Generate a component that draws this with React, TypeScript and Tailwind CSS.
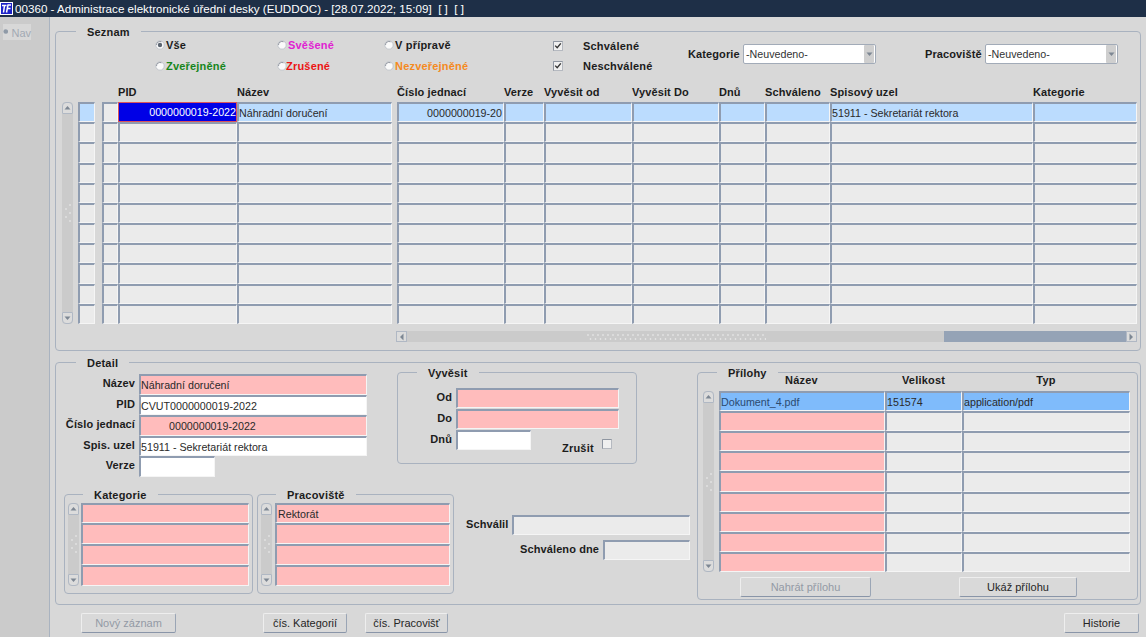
import React from "react";

const cellBase =
  "box-border shrink-0 border-t-2 border-l-2 border-t-[#8f9cb0] border-l-[#8f9cb0] border-r border-b border-r-[#f5f5f5] border-b-[#f5f5f5] overflow-hidden whitespace-nowrap text-[10.7px] leading-[19px] text-[#2a2a2a] pl-0 pr-[1px]";

function Cell({ className = "", children }: { className?: string; children?: React.ReactNode }) {
  return <div className={`${cellBase} ${className}`}>{children}</div>;
}

function Radio({ on = false }: { on?: boolean }) {
  return (
    <svg width="10" height="10" viewBox="0 0 10 10" className="shrink-0">
      <circle cx="5" cy="5" r="4.2" fill="#fafafa" stroke="#c2c6cc" strokeWidth="1" />
      <path d="M1.5 5a3.5 3.5 0 0 1 5-3.2" fill="none" stroke="#8a8f98" strokeWidth="0.9" />
      {on && <circle cx="5" cy="5" r="2.2" fill="#5b6470" />}
    </svg>
  );
}

function Check({ on = true }: { on?: boolean }) {
  return (
    <svg width="10" height="10" viewBox="0 0 10 10" className="shrink-0">
      <rect x="0.5" y="0.5" width="9" height="9" fill="#efefef" stroke="#b5b9c0" />
      <path d="M0.5 9.5V0.5H9.5" fill="none" stroke="#8f96a1" />
      {on && <path d="M2.2 4.6L4.2 6.8L7.8 2.4" fill="none" stroke="#333" strokeWidth="1.4" />}
    </svg>
  );
}

function Arrow({ dir }: { dir: "up" | "down" | "left" | "right" }) {
  const p = {
    up: "M1.5 6.5L4.5 3L7.5 6.5Z",
    down: "M1.5 3.5L4.5 7L7.5 3.5Z",
    left: "M6.5 1.5L3 5L6.5 8.5Z",
    right: "M2.5 1.5L6 5L2.5 8.5Z",
  }[dir];
  return (
    <svg width="9" height="10" viewBox="0 0 9 10">
      <path d={p} fill="#7d8793" />
    </svg>
  );
}

function Dots({ n, v = false }: { n: number; v?: boolean }) {
  return (
    <svg width={v ? 8 : n * 5} height={v ? n * 4 : 8} className="shrink-0">
      {Array.from({ length: n }).map((_, i) => (
        <g key={i}>
          {v ? (
            <circle cx={i % 2 ? 2 : 6} cy={i * 4 + 2} r="0.8" fill="#efefef" />
          ) : (
            <>
              <circle cx={i * 5 + 2} cy="2" r="0.8" fill="#efefef" />
              <circle cx={i * 5 + 4.5} cy="6" r="0.8" fill="#efefef" />
            </>
          )}
        </g>
      ))}
    </svg>
  );
}

function VScroll({ className = "" }: { className?: string }) {
  return (
    <div className={`flex flex-col items-center w-[11px] shrink-0 bg-[#cbcbcb] rounded-[4px] ${className}`}>
      <div className="h-[12px] w-[11px] flex items-center justify-center bg-[#dcdcdc] border border-[#b0b8c4] rounded-t-[4px] rounded-b-[1px]">
        <Arrow dir="up" />
      </div>
      <div className="flex-1 flex items-center justify-center">
        <Dots n={5} v />
      </div>
      <div className="h-[12px] w-[11px] flex items-center justify-center bg-[#dcdcdc] border border-[#b0b8c4] rounded-b-[4px] rounded-t-[1px]">
        <Arrow dir="down" />
      </div>
    </div>
  );
}

function Frame({
  title,
  titleClass,
  className = "",
  children,
}: {
  title: string;
  titleClass: string;
  className?: string;
  children?: React.ReactNode;
}) {
  return (
    <div className={`relative box-border border border-[#a9b2bf] rounded-[4px] ${className}`}>
      <div
        className={`absolute top-[-7px] bg-[#d8d8d8] px-[11px] text-[11px] font-bold leading-[14px] text-[#1c1c1c] tracking-[0.2px] ${titleClass}`}
      >
        {title}
      </div>
      {children}
    </div>
  );
}

function Btn({ children, disabled, className = "" }: { children: string; disabled?: boolean; className?: string }) {
  return (
    <div
      className={`box-border h-[20px] flex items-center justify-center rounded-[2px] border border-t-[#eeeeee] border-l-[#eeeeee] border-r-[#9aa5b5] border-b-[#8995a8] bg-[#d9d9d9] text-[11px] ${disabled ? "text-[#939aa5]" : "text-[#262626]"} ${className}`}
    >
      {children}
    </div>
  );
}

function RadioItem({ label, on, color, labelClass = "" }: { label: string; on?: boolean; color: string; labelClass?: string }) {
  return (
    <div className="flex items-center gap-[1px] h-[14px]">
      <Radio on={on} />
      <span className={`text-[11px] font-bold tracking-[0.2px] ${color} ${labelClass}`}>{label}</span>
    </div>
  );
}

function Select() {
  return (
    <div className="box-border h-[20px] w-[133px] flex items-center justify-between bg-white border border-[#a2abb8] rounded-[2px] shrink-0">
      <span className="pl-[2px] text-[10.7px] text-[#333]">-Neuvedeno-</span>
      <span className="h-[18px] w-[10px] mr-[1px] bg-[#cfcfcf] rounded-[1px] flex items-center justify-center">
        <Arrow dir="down" />
      </span>
    </div>
  );
}

const cols = [
  "w-[17px]",
  "ml-[7px] w-[16px]",
  "w-[119px]",
  "w-[155px]",
  "ml-[5px] w-[107px]",
  "w-[40px]",
  "w-[88px]",
  "w-[87px]",
  "w-[46px]",
  "w-[65px]",
  "w-[203px]",
  "w-[104px]",
];

const headers = ["", "", "PID", "Název", "Číslo jednací", "Verze", "Vyvěsit od", "Vyvěsit Do", "Dnů", "Schváleno", "Spisový uzel", "Kategorie"];

function ListRow({ selected }: { selected?: boolean }) {
  return (
    <div className="flex h-full min-h-0">
      {cols.map((c, i) => {
        const bg = selected && i !== 1 ? "bg-[#bbdcfe]" : "bg-[#ebebeb]";
        if (selected && i === 2)
          return (
            <div key={i} className={`box-border h-full shrink-0 border border-[#d9545c] bg-[#0000e6] text-white text-[10.7px] leading-[18px] text-right overflow-hidden whitespace-nowrap ${c}`}>
              0000000019-2022
            </div>
          );
        let t: React.ReactNode = null;
        if (selected && i === 3) t = "Náhradní doručení";
        if (selected && i === 4) t = <div className="text-right">0000000019-20</div>;
        if (selected && i === 10) t = "51911 - Sekretariát rektora";
        return (
          <Cell key={i} className={`${bg} ${c}`}>
            {t}
          </Cell>
        );
      })}
    </div>
  );
}

function Field({ label, w, bg, h = "h-[20.5px]", children, labelW = "w-[83px]" }: { label: string; w: string; bg: string; h?: string; children?: React.ReactNode; labelW?: string }) {
  return (
    <div className="flex items-start">
      <div className={`${labelW} pr-[4px] pt-[2px] text-right text-[11px] font-bold leading-[15px] tracking-[0.1px] text-[#1c1c1c] shrink-0`}>{label}</div>
      <Cell className={`${w} ${bg} ${h}`}>{children}</Cell>
    </div>
  );
}

function ListBox({ title, titleClass, w, inner, text, gap }: { title: string; titleClass: string; w: string; inner: string; text?: string; gap: string }) {
  return (
    <Frame title={title} titleClass={titleClass} className={`h-[100px] shrink-0 ${w}`}>
      <div className={`flex ${gap} pl-[3px] pt-[8px]`}>
        <VScroll className="h-[83px]" />
        <div className={`grid grid-rows-4 h-[83px] ${inner}`}>
          {[0, 1, 2, 3].map((i) => (
            <Cell key={i} className="w-full bg-[#ffbcbc] pl-[1px] leading-[18px]">
              {i === 0 ? text : null}
            </Cell>
          ))}
        </div>
      </div>
    </Frame>
  );
}

export default function App() {
  return (
    <div
      className="w-[1146px] h-[637px] overflow-hidden flex flex-col bg-[#d8d8d8]"
      style={{ fontFamily: '"Liberation Sans", Arial, sans-serif' }}
    >
      {/* Title bar */}
      <div className="h-[17px] shrink-0 bg-[#1e2f47] flex items-center text-white text-[11.65px]">
        <svg width="13" height="13" viewBox="0 0 13 13" className="mr-[2px] shrink-0">
          <rect width="13" height="13" fill="#fff" />
          <rect x="1" y="1" width="11" height="11" fill="#1c22c8" />
          <path d="M2 3.5H6.5M4.5 3.5L3.5 10.5M7.5 3H11M8 3L6.5 10.5M7.5 6.5H10.5" stroke="#fff" strokeWidth="1.5" fill="none" />
        </svg>
        <span className="whitespace-pre">00360 - Administrace elektronické úřední desky (EUDDOC) - [28.07.2022; 15:09]  [ ]  [ ]</span>
      </div>

      <div className="flex flex-1 min-h-0">
        {/* Nav */}
        <div className="w-[50px] shrink-0 bg-[#cbcbcb] border-r border-[#a9b3c0] pt-[7px] pl-[3px]">
          <div className="w-[28px] h-[16px] bg-[#d8d8d8] flex items-start text-[11px] leading-[18px] text-[#a2a9b3]">
            <svg width="7" height="7" viewBox="0 0 7 7" className="mr-[3px] mt-[4px]">
              <circle cx="3.5" cy="3.5" r="3" fill="#8f9aa7" />
            </svg>
            Nav
          </div>
        </div>

        <div className="flex-1 min-w-0 pl-[5px] pt-[14px]">
          {/* Seznam */}
          <Frame title="Seznam" titleClass="left-[20px]" className="w-[1086px] h-[320px] pt-[6px]">
            {/* filters */}
            <div className="flex h-[38px]">
              <div className="w-[99px]" />
              <div className="w-[122px] flex flex-col gap-[7px]">
                <RadioItem label="Vše" on color="text-[#1c1c1c]" />
                <RadioItem label="Zveřejněné" color="text-[#16861b]" />
              </div>
              <div className="w-[107px] flex flex-col gap-[7px]">
                <RadioItem label="Svěšené" color="text-[#e01fd2]" />
                <RadioItem label="Zrušené" color="text-[#ec1414]" labelClass="ml-[-2px]" />
              </div>
              <div className="w-[169px] flex flex-col gap-[7px]">
                <RadioItem label="V přípravě" color="text-[#1c1c1c]" />
                <RadioItem label="Nezveřejněné" color="text-[#f58a1f]" />
              </div>
              <div className="w-[135px] flex flex-col gap-[6px] pt-[1px]">
                <div className="flex items-center gap-[20px] h-[14px]">
                  <Check />
                  <span className="text-[11px] font-bold tracking-[0.2px] text-[#1c1c1c]">Schválené</span>
                </div>
                <div className="flex items-center gap-[20px] h-[14px]">
                  <Check />
                  <span className="text-[11px] font-bold tracking-[0.2px] text-[#1c1c1c]">Neschválené</span>
                </div>
              </div>
              <div className="flex items-start pt-[6px]">
                <span className="w-[55px] pt-[2px] text-[11px] font-bold tracking-[0.1px] text-[#1c1c1c]">Kategorie</span>
                <Select />
                <span className="ml-[49px] w-[60px] pt-[2px] text-[11px] font-bold tracking-[0.1px] text-[#1c1c1c]">Pracoviště</span>
                <Select />
              </div>
            </div>

            {/* table header */}
            <div className="flex h-[17px] mt-[9px] ml-[22px] text-[11px] font-bold tracking-[0.1px] text-[#1c1c1c] leading-[15px]">
              {cols.map((c, i) => (
                <div key={i} className={`shrink-0 whitespace-nowrap ${c}`}>
                  {headers[i]}
                </div>
              ))}
            </div>

            {/* table body */}
            <div className="flex ml-[6px] h-[222px]">
              <VScroll className="h-[222px] mr-[5px]" />
              <div className="grid grid-rows-11 h-[222px]">
                {Array.from({ length: 11 }).map((_, i) => (
                  <ListRow key={i} selected={i === 0} />
                ))}
              </div>
            </div>

            {/* horizontal scrollbar */}
            <div className="flex h-[11px] mt-[7px] ml-[340px] w-[741px]">
              <div className="w-[11px] bg-[#dcdcdc] border border-[#b0b8c4] flex items-center justify-center">
                <Arrow dir="left" />
              </div>
              <div className="w-[537px] bg-[#cbcbcb] flex items-center justify-center">
                <Dots n={36} />
              </div>
              <div className="flex-1 bg-[#95a3b6]" />
              <div className="w-[11px] bg-[#dcdcdc] border border-[#b0b8c4] flex items-center justify-center">
                <Arrow dir="right" />
              </div>
            </div>
          </Frame>

          {/* Detail */}
          <Frame title="Detail" titleClass="left-[20px]" className="w-[1086px] h-[243px] mt-[11px] flex pt-[11px]">
            {/* left column */}
            <div className="w-[341px] shrink-0">
              <div className="flex flex-col">
                <Field label="Název" w="w-[228px]" bg="bg-[#ffbcbc]">
                  Náhradní doručení
                </Field>
                <Field label="PID" w="w-[228px]" bg="bg-white">
                  CVUT0000000019-2022
                </Field>
                <Field label="Číslo jednací" w="w-[228px]" bg="bg-[#ffbcbc]">
                  <span className="pl-[28px]">0000000019-2022</span>
                </Field>
                <Field label="Spis. uzel" w="w-[228px]" bg="bg-white">
                  51911 - Sekretariát rektora
                </Field>
                <Field label="Verze" w="w-[76px]" bg="bg-white" />
              </div>
              <div className="flex gap-[4px] ml-[8px] mt-[17px]">
                <ListBox title="Kategorie" titleClass="left-[18px]" w="w-[189px]" inner="w-[168px]" gap="gap-[2px]" />
                <ListBox title="Pracoviště" titleClass="left-[18px]" w="w-[197px]" inner="w-[175px]" gap="gap-[3px]" text="Rektorát" />
              </div>
            </div>

            {/* middle column */}
            <div className="w-[300px] shrink-0">
              <Frame title="Vyvěsit" titleClass="left-[19px]" className="w-[240px] h-[92px] mt-[-2px] pt-[15px]">
                <div className="flex flex-col gap-[1px]">
                  <Field label="Od" labelW="w-[58px]" w="w-[163px]" bg="bg-[#ffbcbc]" h="h-[20px]" />
                  <Field label="Do" labelW="w-[58px]" w="w-[163px]" bg="bg-[#ffbcbc]" h="h-[20px]" />
                  <div className="flex items-start">
                    <Field label="Dnů" labelW="w-[58px]" w="w-[75px]" bg="bg-white" h="h-[20px]" />
                    <span className="ml-[31px] mt-[11px] text-[11px] leading-[14px] font-bold tracking-[0.2px] text-[#1c1c1c]">Zrušit</span>
                    <span className="ml-[8px] mt-[9px]">
                      <Check on={false} />
                    </span>
                  </div>
                </div>
              </Frame>
              <div className="mt-[51px] flex flex-col items-end w-[293px] gap-[5px]">
                <Field label="Schválil" labelW="w-[46px]" w="w-[178px]" bg="bg-[#ebebeb]" h="h-[20px]" />
                <Field label="Schváleno dne" labelW="w-[90px]" w="w-[87px]" bg="bg-[#ebebeb]" h="h-[20px]" />
              </div>
            </div>

            {/* Přílohy */}
            <Frame title="Přílohy" titleClass="left-[19px]" className="w-[441px] h-[228px] mt-[-2px] shrink-0">
              <div className="flex h-[18px] ml-[21px] text-[11px] leading-[14px] font-bold tracking-[0.2px] text-[#1c1c1c]">
                <div className="w-[166px] pl-[66px]">Název</div>
                <div className="w-[77px] text-center">Velikost</div>
                <div className="w-[168px] text-center">Typ</div>
              </div>
              <div className="flex ml-[5px] gap-[5px]">
                <VScroll className="h-[181px]" />
                <div className="grid grid-rows-9 h-[181px]">
                  {Array.from({ length: 9 }).map((_, i) => (
                    <div key={i} className="flex h-full min-h-0">
                      <Cell className={`w-[166px] ${i === 0 ? "bg-[#7fbbfb] text-[#2b4a6f]" : "bg-[#ffbcbc]"}`}>{i === 0 ? "Dokument_4.pdf" : null}</Cell>
                      <Cell className={`w-[77px] ${i === 0 ? "bg-[#7fbbfb]" : "bg-[#ebebeb]"}`}>{i === 0 ? "151574" : null}</Cell>
                      <Cell className={`w-[168px] ${i === 0 ? "bg-[#7fbbfb]" : "bg-[#ebebeb]"}`}>{i === 0 ? "application/pdf" : null}</Cell>
                    </div>
                  ))}
                </div>
              </div>
              <div className="flex mt-[5px] ml-[42px]">
                <Btn disabled className="w-[131px]">
                  Nahrát přílohu
                </Btn>
                <Btn className="w-[118px] ml-[88px]">Ukáž přílohu</Btn>
              </div>
            </Frame>
          </Frame>

          {/* Bottom buttons */}
          <div className="flex mt-[8px]">
            <Btn disabled className="ml-[26px] w-[95px]">
              Nový záznam
            </Btn>
            <Btn className="ml-[87px] w-[84px]">čís. Kategorií</Btn>
            <Btn className="ml-[18px] w-[83px]">čís. Pracovišť</Btn>
            <Btn className="ml-[616px] w-[75px]">Historie</Btn>
          </div>
        </div>
      </div>
    </div>
  );
}
